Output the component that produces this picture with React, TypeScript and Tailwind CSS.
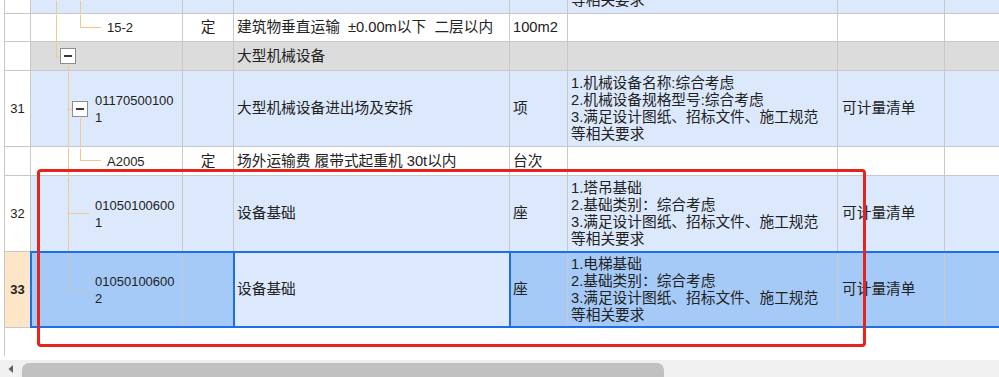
import React from "react";

const FONT = "font-['Liberation_Sans','Noto_Sans_CJK_SC',sans-serif]";
const ORANGE = "#f3c890";
const GREY = "#c4c4c4";

type Seg = [number, number, number, number];
type Bg = "blue" | "white" | "gray" | "sel";

const BG: Record<Bg, string> = {
  blue: "bg-[#dce8fb]",
  white: "bg-white",
  gray: "bg-[#dcdcdc]",
  sel: "bg-[#a5caf7]",
};

function Tree({
  h,
  segs,
  boxes = [],
  color = ORANGE,
}: {
  h: number;
  segs: Seg[];
  boxes?: [number, number][];
  color?: string;
}) {
  return (
    <svg
      className="absolute left-0 top-0"
      width={152}
      height={h}
      shapeRendering="crispEdges"
    >
      {segs.map(([x1, y1, x2, y2], i) => (
        <line
          key={i}
          x1={x1 + 0.5}
          y1={y1 + 0.5}
          x2={x2 + 0.5}
          y2={y2 + 0.5}
          stroke={color}
          strokeWidth={1}
        />
      ))}
      {boxes.map(([x, y], i) => (
        <g key={i}>
          <rect
            x={x + 0.5}
            y={y + 0.5}
            width={15}
            height={15}
            fill="#fff"
            stroke="#8e8e8e"
          />
          <rect x={x + 4} y={y + 7} width={8} height={2} fill="#3a3a3a" />
        </g>
      ))}
    </svg>
  );
}

interface RowProps {
  h: number;
  hClass: string;
  bg: Bg;
  num?: string;
  code?: React.ReactNode;
  codePad?: string;
  segs: Seg[];
  boxes?: [number, number][];
  treeColor?: string;
  type?: string;
  name?: string;
  unit?: string;
  feat?: string[];
  extra?: string;
  selected?: boolean;
  partial?: boolean;
}

function Row({
  h,
  hClass,
  bg,
  num,
  code,
  codePad = "pl-[64px]",
  segs,
  boxes,
  treeColor,
  type,
  name,
  unit,
  feat,
  extra,
  selected,
  partial,
}: RowProps) {
  const b = BG[bg];
  const line = "border-r border-[#c8c8c8]";
  return (
    <div className={`relative flex border-b border-[#c8c8c8] ${hClass}`}>
      <div
        className={`flex w-[26px] shrink-0 items-center justify-center text-[13px] ${line} ${
          selected ? "bg-[#fde5c8] font-bold" : "bg-white"
        }`}
      >
        {num}
      </div>
      <div className={`relative flex w-[152px] shrink-0 items-center ${b} ${line}`}>
        <Tree h={h} segs={segs} boxes={boxes} color={treeColor} />
        <div className={`relative text-[13px] leading-[17px] ${codePad}`}>{code}</div>
      </div>
      <div
        className={`flex w-[51px] shrink-0 items-center justify-center text-[14.7px] ${b} ${line}`}
      >
        {type}
      </div>
      <div
        className={`flex w-[276px] shrink-0 items-center whitespace-pre pl-[3px] text-[14.7px] ${
          selected ? "bg-[#dde9fc]" : b
        } ${line}`}
      >
        {name}
      </div>
      <div className={`flex w-[58px] shrink-0 items-center pl-[3px] text-[14.7px] ${b} ${line}`}>
        {unit}
      </div>
      <div
        className={`flex w-[270px] shrink-0 flex-col overflow-hidden pl-[3px] text-[14.7px] leading-[17px] ${
          partial ? "justify-end pb-[4px]" : "justify-center"
        } ${b} ${line}`}
      >
        {feat?.map((t, i) => (
          <div key={i} className="whitespace-nowrap">
            {t}
          </div>
        ))}
      </div>
      <div className={`flex w-[107px] shrink-0 items-center pl-[4px] text-[14.7px] ${b} ${line}`}>
        {extra}
      </div>
      <div className={`flex-1 ${b}`} />
      {selected && (
        <>
          <div className="absolute -top-[1px] -bottom-[1px] left-[25px] -right-[4px] border-2 border-[#1c6fe8]" />
          <div className="absolute -top-[1px] -bottom-[1px] left-[228px] w-[278px] border-2 border-[#1c6fe8]" />
        </>
      )}
    </div>
  );
}

const FEAT_TAIL = ["3.满足设计图纸、招标文件、施工规范", "等相关要求"];

export default function App() {
  return (
    <div className={`relative h-[377px] w-[999px] overflow-hidden bg-white text-[#222] ${FONT}`}>
      <div className="ml-[4px] h-[356px] border-l border-[#c8c8c8]">
        <Row
          h={13}
          hClass="h-[14px]"
          bg="blue"
          segs={[
            [25, 0, 25, 13],
            [49, 0, 49, 13],
          ]}
          feat={["等相关要求"]}
          partial
        />
        <Row
          h={27}
          hClass="h-[28px]"
          bg="white"
          segs={[
            [25, 0, 25, 27],
            [49, 0, 49, 13],
            [49, 13, 69, 13],
          ]}
          code="15-2"
          codePad="pl-[76px]"
          type="定"
          name="建筑物垂直运输  ±0.00m以下  二层以内"
          unit="100m2"
        />
        <Row
          h={28}
          hClass="h-[29px]"
          bg="gray"
          segs={[
            [25, 0, 25, 15],
            [25, 15, 29, 15],
            [37, 22, 37, 28],
          ]}
          boxes={[[29, 6]]}
          name="大型机械设备"
        />
        <Row
          h={75}
          hClass="h-[76px]"
          bg="blue"
          num="31"
          segs={[
            [37, 0, 37, 75],
            [37, 38, 41, 38],
            [49, 46, 49, 75],
          ]}
          boxes={[[41, 30]]}
          code={
            <>
              <div>01170500100</div>
              <div>1</div>
            </>
          }
          name="大型机械设备进出场及安拆"
          unit="项"
          feat={["1.机械设备名称:综合考虑", "2.机械设备规格型号:综合考虑", ...FEAT_TAIL]}
          extra="可计量清单"
        />
        <Row
          h={28}
          hClass="h-[29px]"
          bg="white"
          segs={[
            [37, 0, 37, 28],
            [49, 0, 49, 13],
            [49, 13, 69, 13],
          ]}
          code="A2005"
          codePad="pl-[76px]"
          type="定"
          name="场外运输费 履带式起重机 30t以内"
          unit="台次"
        />
        <Row
          h={75}
          hClass="h-[76px]"
          bg="blue"
          num="32"
          segs={[
            [37, 0, 37, 75],
            [37, 37, 57, 37],
          ]}
          code={
            <>
              <div>01050100600</div>
              <div>1</div>
            </>
          }
          name="设备基础"
          unit="座"
          feat={["1.塔吊基础", "2.基础类别：综合考虑", ...FEAT_TAIL]}
          extra="可计量清单"
        />
        <Row
          h={75}
          hClass="h-[76px]"
          bg="sel"
          num="33"
          selected
          treeColor={GREY}
          segs={[
            [37, 0, 37, 38],
            [37, 38, 57, 38],
          ]}
          code={
            <>
              <div>01050100600</div>
              <div>2</div>
            </>
          }
          name="设备基础"
          unit="座"
          feat={["1.电梯基础", "2.基础类别：综合考虑", ...FEAT_TAIL]}
          extra="可计量清单"
        />
      </div>

      {/* horizontal scrollbar */}
      <div className="absolute bottom-0 left-0 right-0 flex h-[17px] items-end bg-[#f0f0f0]">
        <div className="flex h-full w-[22px] items-center justify-center">
          <svg width="8" height="10" viewBox="0 0 8 10">
            <path d="M6 1 L1.5 5 L6 9 Z" fill="#606060" />
          </svg>
        </div>
        <div className="h-[14px] w-[642px] rounded-t-[7px] bg-[#c1c1c1]" />
      </div>

      {/* red annotation box */}
      <div className="absolute left-[37px] top-[169px] h-[178px] w-[829px] rounded-[4px] border-[3px] border-[#e5241d]" />
    </div>
  );
}
